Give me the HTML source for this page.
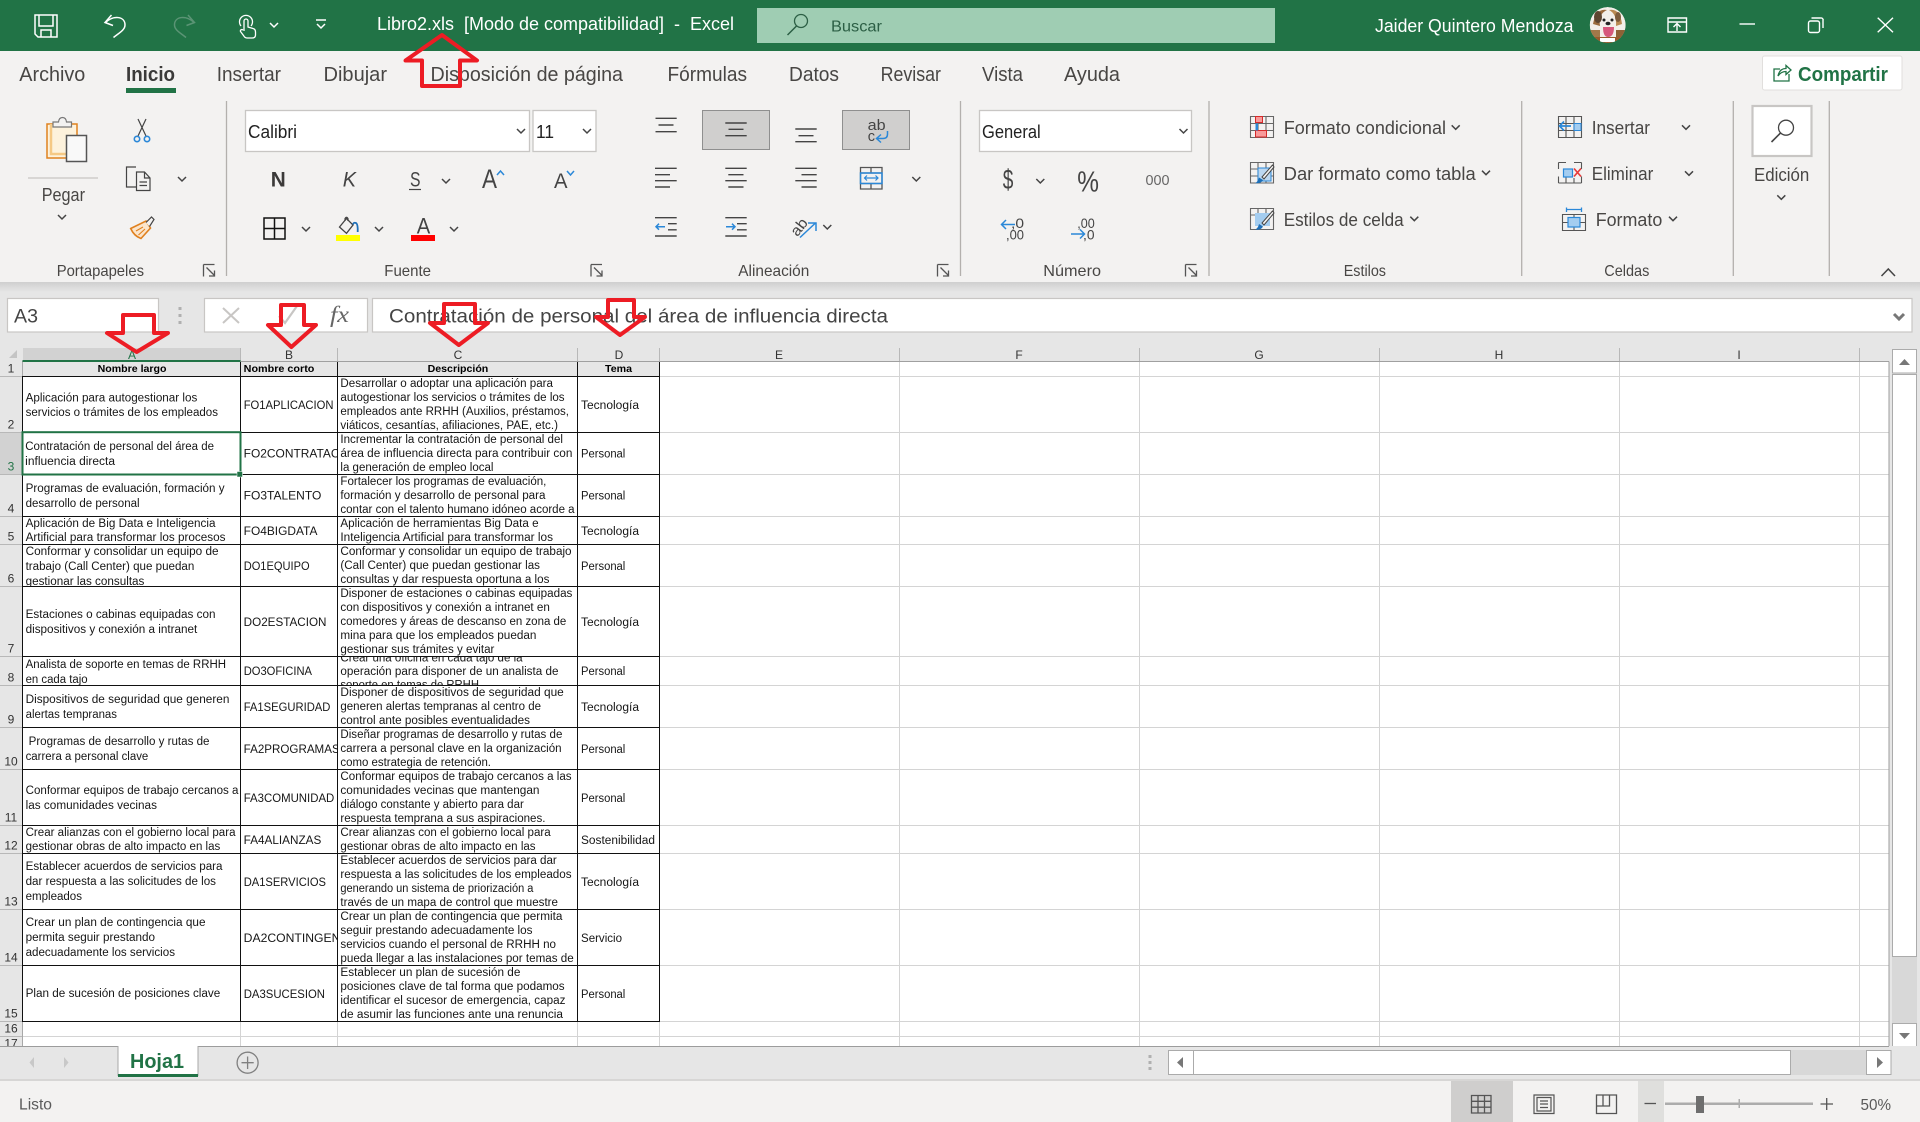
<!DOCTYPE html>
<html lang="es"><head><meta charset="utf-8"><title>Libro2.xls - Excel</title>
<style>
html,body{margin:0;padding:0;background:#e6e6e6;width:1920px;height:1122px;overflow:hidden}
svg{display:block;font-family:"Liberation Sans",sans-serif}
.c{font-size:11.5px;fill:#161616}
.h{font-size:10.5px;font-weight:bold;fill:#000}
.r{font-size:12px;fill:#333;text-anchor:middle}
.l{font-size:16px;fill:#484644}
.t{font-size:20px;fill:#484644}
.m{font-size:18px;fill:#484644}
.w{font-size:18px;fill:#fff}
.ln{stroke:#444;stroke-width:1.4;fill:none}
</style></head><body>
<svg width="1920" height="1122" viewBox="0 0 1920 1122" xmlns="http://www.w3.org/2000/svg" lang="es">
<defs>
<path id="v" d="M-4,-2 L0,2 L4,-2" fill="none" stroke="#444" stroke-width="1.5"/>
<g id="lau"><path d="M0,0H11M0,0V12M3,3L11,11M11,6V11.5H5.5" fill="none" stroke="#555" stroke-width="1.3"/></g>
<linearGradient id="sh" x1="0" y1="0" x2="0" y2="1"><stop offset="0" stop-color="#cfcfcf"/><stop offset="1" stop-color="#e6e6e6"/></linearGradient>
<clipPath id="cb"><rect x="241" y="340" width="96.4" height="700"/></clipPath>
<clipPath id="c8"><rect x="338" y="657" width="239" height="28"/></clipPath>
<clipPath id="c6"><rect x="23" y="545" width="217" height="41"/></clipPath>
<clipPath id="av"><circle cx="1607.7" cy="25" r="18"/></clipPath>
</defs>

<!-- base -->
<rect x="0" y="0" width="1920" height="1122" fill="#e6e6e6"/>
<rect x="0" y="0" width="1920" height="51" fill="#217346"/>
<rect x="0" y="51" width="1920" height="231" fill="#f3f2f1"/>
<rect x="0" y="282" width="1920" height="10" fill="url(#sh)"/>

<!-- title bar icons -->
<g fill="none" stroke="#fff" stroke-width="1.5">
<path d="M35,15H57V37H38L35,34Z"/><path d="M39,15V26H53V15"/><path d="M41,37V30H51V37"/>
<path d="M111.500,15 L105,22.500 L113,25.500 M105.500,22.500 C113,15 125,16 125,25 C125,30 119,33 113.500,37.500"/>
</g>
<path d="M188,15 L194.500,22.500 L186.500,25.500 M194,22.500 C186.500,15 174.500,16 174.500,25 C174.500,30 180.500,33 186,37.500" fill="none" stroke="#5b9475" stroke-width="1.500"/>
<g fill="none" stroke="#fff" stroke-width="1.3">
<path d="M241,26 A6.500,6.500 0 1 1 251,26"/>
<path d="M244,31 V21 A2,2 0 0 1 248,21 V27 L253,28.500 C255,29 255.500,30 255.500,32 V35 C255.500,37 254,38 252,38 H247 C245,38 244.500,37 243.500,35.500 L240.500,31.500 C240,30 241.500,29 243,30"/>
</g>
<path d="M270,23 L274,27 L278,23" fill="none" stroke="#fff" stroke-width="1.500"/>
<path d="M316,20H326M317,24 L321,28 L325,24" fill="none" stroke="#fff" stroke-width="1.500"/>
<text x="377" y="30" class="w" textLength="357" lengthAdjust="spacingAndGlyphs" xml:space="preserve">Libro2.xls  [Modo de compatibilidad]  -  Excel</text>
<rect x="757" y="8" width="518" height="35" fill="#9fcdb3"/>
<circle cx="801" cy="21" r="6.500" fill="none" stroke="#2c5f45" stroke-width="1.300"/>
<path d="M796.500,26 L787.500,35" stroke="#2c5f45" stroke-width="1.500"/>
<text x="831" y="31.500" font-size="16" fill="#2c5f45" textLength="51" lengthAdjust="spacingAndGlyphs">Buscar</text>
<text x="1375" y="32" class="w" textLength="198.500" lengthAdjust="spacingAndGlyphs">Jaider Quintero Mendoza</text>

<!-- avatar -->
<g clip-path="url(#av)">
<circle cx="1607.700" cy="25" r="18" fill="#f3efe9"/>
<path d="M1593,24 Q1596,8 1607,10 Q1598,14 1600,26Z" fill="#9a6a3c"/>
<path d="M1622,24 Q1620,8 1609,10 Q1617,14 1616,26Z" fill="#b98a52"/>
<ellipse cx="1598" cy="17" rx="4" ry="6" fill="#5d4630"/>
<ellipse cx="1618" cy="17" rx="3" ry="5" fill="#7d5c3c"/>
<circle cx="1604" cy="20" r="1.500" fill="#222"/><circle cx="1612" cy="20" r="1.500" fill="#222"/>
<ellipse cx="1608" cy="23.500" rx="2.500" ry="1.800" fill="#222"/>
<path d="M1603,27 H1614 Q1614,37 1608,37 Q1603,37 1603,27Z" fill="#d7587c"/>
<rect x="1590" y="30" width="10" height="7" fill="#a37849"/>
<rect x="1616" y="30" width="10" height="7" fill="#8d6236"/>
<rect x="1590" y="37" width="36" height="6" fill="#9b5a2c"/>
<rect x="1600" y="38" width="15" height="4" fill="#fff"/>
</g>

<!-- window buttons -->
<g fill="none" stroke="#fff" stroke-width="1.400">
<path d="M1668,18H1686.500V32H1668ZM1668,22H1686.500M1677,31V24M1673.500,27L1677,23.500L1680.500,27"/>
<path d="M1739.500,24H1755"/>
<rect x="1808.500" y="21" width="11" height="11.500" rx="2"/>
<path d="M1811.500,18H1820.500A2,2 0 0 1 1823,20.500V28"/>
<path d="M1877.700,17.700L1893,32.300M1893,17.700L1877.700,32.300"/>
</g>

<!-- tabs -->
<text x="19.300" y="81" class="t" textLength="66" lengthAdjust="spacingAndGlyphs">Archivo</text>
<text x="126" y="81" class="t" textLength="49" lengthAdjust="spacingAndGlyphs" font-weight="bold" style="fill:#3b3a39">Inicio</text>
<rect x="126" y="88" width="50" height="5" fill="#217346"/>
<text x="216.700" y="81" class="t" textLength="64.300" lengthAdjust="spacingAndGlyphs">Insertar</text>
<text x="323.500" y="81" class="t" textLength="63.500" lengthAdjust="spacingAndGlyphs">Dibujar</text>
<text x="430.500" y="81" class="t" textLength="192.500" lengthAdjust="spacingAndGlyphs">Disposición de página</text>
<text x="667.500" y="81" class="t" textLength="79.500" lengthAdjust="spacingAndGlyphs">Fórmulas</text>
<text x="789" y="81" class="t" textLength="50" lengthAdjust="spacingAndGlyphs">Datos</text>
<text x="880.600" y="81" class="t" textLength="60.400" lengthAdjust="spacingAndGlyphs">Revisar</text>
<text x="982" y="81" class="t" textLength="41" lengthAdjust="spacingAndGlyphs">Vista</text>
<text x="1064" y="81" class="t" textLength="56" lengthAdjust="spacingAndGlyphs">Ayuda</text>
<rect x="1762.500" y="56" width="139.500" height="34" rx="2" fill="#fff" stroke="#e1dfdd"/>
<path d="M1780,69H1774V81H1789V74M1778,76C1779,71 1782,68.500 1786,68.500V65.500L1791,70L1786,74.500V71.500C1783,71.500 1780,73 1778,76Z" fill="none" stroke="#217346" stroke-width="1.300"/>
<text x="1798" y="81" font-size="20" font-weight="bold" fill="#217346" textLength="90" lengthAdjust="spacingAndGlyphs">Compartir</text>

<!-- group separators -->
<g stroke="#b3b0ad" stroke-width="1.300">
<path d="M226.500,101V276M960.500,101V276M1209,101V276M1521.700,101V276M1733.300,101V276M1829.300,101V276"/>
</g>

<!-- Portapapeles -->
<path d="M47,124H77V158H47Z" fill="#fdf2dc" stroke="#e0811f" stroke-width="1.500"/>
<path d="M51,124V154H66" fill="none" stroke="#f5c985" stroke-width="2.500"/>
<path d="M53,127V122H58.500Q59,117.500 62.500,117.500Q66,117.500 66.500,122H71.500V127Z" fill="#f3f2f1" stroke="#777" stroke-width="1.200"/>
<rect x="66.500" y="135.500" width="20" height="26" fill="#f9f9f9" stroke="#555" stroke-width="1.500"/>
<path d="M28,178H98" stroke="#c8c6c4" stroke-width="1.200"/>
<text x="41.700" y="201" class="m" textLength="43.300" lengthAdjust="spacingAndGlyphs">Pegar</text>
<use href="#v" x="62" y="217"/>
<path d="M138,119L146,136M146,119L138,136" stroke="#444" stroke-width="1.200" fill="none"/>
<circle cx="137" cy="139" r="2.700" fill="none" stroke="#2b88d8" stroke-width="1.600"/>
<circle cx="147" cy="139" r="2.700" fill="none" stroke="#2b88d8" stroke-width="1.600"/>
<path d="M136,167H126.500V187H136.500 M136.500,172V190.500H150V178L144.500,172Z M144.500,172V178H150M139.500,182H147M139.500,185.500H147" fill="none" stroke="#444" stroke-width="1.200"/>
<use href="#v" x="182" y="179"/>
<path d="M130.700,228.500L146,221L150.500,228L141,238.500Q134,236 130.700,228.500Z" fill="#fbe5cb" stroke="#e0811f" stroke-width="1.600"/>
<path d="M136,231L143,227M138.500,235L145,229" fill="none" stroke="#e0811f" stroke-width="1.100"/>
<path d="M146,222.500L151.500,217L154,219.500L149.500,226.500" fill="#f3f2f1" stroke="#444" stroke-width="1.200"/>
<text x="56.700" y="276" class="l" textLength="87.300" lengthAdjust="spacingAndGlyphs">Portapapeles</text>
<use href="#lau" x="203.500" y="264.500"/>

<!-- Fuente -->
<rect x="245.500" y="110.500" width="284" height="41" fill="#fff" stroke="#c8c6c4" stroke-width="1.300"/>
<text x="248" y="138" font-size="18" fill="#222" textLength="49" lengthAdjust="spacingAndGlyphs">Calibri</text>
<use href="#v" x="521" y="131"/>
<rect x="533" y="110.500" width="63" height="41" fill="#fff" stroke="#c8c6c4" stroke-width="1.300"/>
<text x="536" y="138" font-size="18" fill="#222" textLength="18" lengthAdjust="spacingAndGlyphs">11</text>
<use href="#v" x="587" y="131"/>
<text x="270.700" y="186.700" font-size="21" font-weight="bold" fill="#3b3a39" textLength="15" lengthAdjust="spacingAndGlyphs">N</text>
<text x="342.700" y="186.700" font-size="21" font-style="italic" fill="#444" textLength="13.300" lengthAdjust="spacingAndGlyphs">K</text>
<text x="410" y="186.500" font-size="21" fill="#444" textLength="10.500" lengthAdjust="spacingAndGlyphs">S</text>
<path d="M409,189.500H421" stroke="#444" stroke-width="1.200"/>
<use href="#v" x="446" y="181"/>
<text x="482" y="188" font-size="27" fill="#444" textLength="15" lengthAdjust="spacingAndGlyphs">A</text>
<path d="M497,175L500.500,171L504,175" fill="none" stroke="#2b88d8" stroke-width="1.500"/>
<text x="554" y="188" font-size="21" fill="#444" textLength="13.500" lengthAdjust="spacingAndGlyphs">A</text>
<path d="M567,171L570.500,175L574,171" fill="none" stroke="#2b88d8" stroke-width="1.500"/>
<path d="M264,218H285V239H264ZM274.500,218V239M264,228.500H285" fill="none" stroke="#111" stroke-width="1.500"/>
<use href="#v" x="306" y="229"/>
<path d="M339.500,227L346.500,218.500L353,225L346.500,233.300Z" fill="#f3f2f1" stroke="#444" stroke-width="1.300"/>
<path d="M345,221V218.500Q346.500,216 348,218.500V221" fill="none" stroke="#444" stroke-width="1.200"/>
<path d="M353,224.500Q353.500,222 356,223Q358,224 357.700,232" fill="none" stroke="#1d6fb8" stroke-width="1.800"/>
<rect x="336" y="235" width="24" height="6" fill="#ff0"/>
<use href="#v" x="379" y="229"/>
<text x="416.700" y="233.300" font-size="22" fill="#444" textLength="13.500" lengthAdjust="spacingAndGlyphs">A</text>
<rect x="411" y="235" width="24" height="6" fill="#f00"/>
<use href="#v" x="454" y="229"/>
<text x="384.300" y="276" class="l" textLength="46.700" lengthAdjust="spacingAndGlyphs">Fuente</text>
<use href="#lau" x="591" y="264.500"/>

<!-- Alineación -->
<rect x="702.500" y="110.500" width="67" height="39" fill="#d0cfce" stroke="#8f8f8f"/>
<rect x="842.500" y="110.500" width="67" height="39" fill="#d0cfce" stroke="#8f8f8f"/>
<path class="ln" d="M655.500,118.300H676.700M658.500,125H673.500M655.500,131.700H676.700
M725.300,123H746.700M728.500,129.300H743.500M725.300,135.700H746.700
M795.300,129H816.700M798.500,135.700H813.500M795.300,141.700H816.700
M655,168.300H676.700M655,174.700H670M655,180.700H676.700M655,187H670
M725.300,168.300H746.700M728.300,174.700H743.500M725.300,180.700H746.700M728.300,187H743.500
M795.300,168.300H816.700M801.500,174.700H816.700M795.300,180.700H816.700M801.500,187H816.700
M655,217.700H676.700M668,223.700H676.700M668,229.800H676.700M655,236H676.700
M725.300,217.700H746.700M737,223.700H746.700M737,229.800H746.700M725.300,236H746.700"/>
<text x="867.700" y="130" font-size="14.500" fill="#444" textLength="18" lengthAdjust="spacingAndGlyphs">ab</text>
<text x="867.700" y="141" font-size="14.500" fill="#444" textLength="8">c</text>
<path d="M887.500,131V134Q887.500,138.500 883,138.500H877M881,134.500L876.500,138.500L881,142.500" fill="none" stroke="#2b88d8" stroke-width="1.500"/>
<path d="M860.500,167.500H882V189H860.500ZM860.500,173H882M860.500,183.500H882M871,167.500V173M871,183.500V189" fill="none" stroke="#555" stroke-width="1.300"/>
<rect x="860.500" y="173" width="21.500" height="10.500" fill="none" stroke="#2b88d8" stroke-width="1.500"/>
<path d="M864.500,178H878M867,175.500L864.500,178L867,180.500M875.500,175.500L878,178L875.500,180.500" fill="none" stroke="#2b88d8" stroke-width="1.200"/>
<use href="#v" x="916.300" y="179"/>
<path d="M665,226.700H656M659,223.700L656,226.700L659,229.700" fill="none" stroke="#2b88d8" stroke-width="1.500"/>
<path d="M726,226.700H735M732,223.700L735,226.700L732,229.700" fill="none" stroke="#2b88d8" stroke-width="1.500"/>
<text transform="translate(797,228) rotate(-52)" x="-7" y="6" font-size="15" fill="#444" textLength="18" lengthAdjust="spacingAndGlyphs">ab</text>
<path d="M800,237.500L815.500,223M808,223H816V231" fill="none" stroke="#2b88d8" stroke-width="1.500"/>
<use href="#v" x="827.300" y="227"/>
<text x="738.300" y="276" class="l" textLength="71" lengthAdjust="spacingAndGlyphs">Alineación</text>
<use href="#lau" x="937.500" y="264.500"/>

<!-- Número -->
<rect x="979.500" y="110.500" width="212" height="41" fill="#fff" stroke="#c8c6c4" stroke-width="1.300"/>
<text x="982" y="138" font-size="18" fill="#222" textLength="58.700" lengthAdjust="spacingAndGlyphs">General</text>
<use href="#v" x="1183.500" y="131"/>
<text x="1002.700" y="189" font-size="28" fill="#444" textLength="10.600" lengthAdjust="spacingAndGlyphs">$</text>
<use href="#v" x="1040.300" y="181"/>
<text x="1077.300" y="191.500" font-size="29" fill="#444" textLength="21.700" lengthAdjust="spacingAndGlyphs">%</text>
<text x="1145.500" y="185" font-size="14.500" fill="#666" textLength="24" lengthAdjust="spacingAndGlyphs">000</text>
<text x="1011" y="228" font-size="14" fill="#444" textLength="13" lengthAdjust="spacingAndGlyphs">,0</text>
<text x="1006" y="239.300" font-size="14" fill="#444" textLength="18" lengthAdjust="spacingAndGlyphs">,00</text>
<path d="M1015,224.500H1002M1006,220L1001.500,224.500L1006,229" fill="none" stroke="#2b88d8" stroke-width="1.500"/>
<text x="1077.300" y="228" font-size="14" fill="#444" textLength="17.500" lengthAdjust="spacingAndGlyphs">,00</text>
<text x="1083" y="239.300" font-size="14" fill="#444" textLength="11.500" lengthAdjust="spacingAndGlyphs">,0</text>
<path d="M1071,234H1084.500M1080,229.500L1084.500,234L1080,238.500" fill="none" stroke="#2b88d8" stroke-width="1.500"/>
<text x="1043.300" y="276" class="l" textLength="57.700" lengthAdjust="spacingAndGlyphs">Número</text>
<use href="#lau" x="1185.500" y="264.500"/>

<!-- Estilos -->
<g fill="none" stroke="#666" stroke-width="1.100">
<path d="M1250.500,116.500H1273.500V137.500H1250.500ZM1250.500,123.500H1273.500M1250.500,130.500H1273.500M1258,116.500V137.500M1266,116.500V137.500"/>
<path d="M1250.500,162.500H1273.500V183H1250.500ZM1250.500,169H1273.500M1250.500,176H1273.500M1258,162.500V183M1266,162.500V183"/>
<path d="M1250.500,208.500H1273.500V229.500H1250.500ZM1250.500,215H1273.500M1258,208.500V215M1266,208.500V215"/>
</g>
<rect x="1255.500" y="116.500" width="7" height="6" fill="#f79a9a" stroke="#d62a2a"/>
<rect x="1255.500" y="130.500" width="11" height="6.500" fill="#f79a9a" stroke="#d62a2a"/>
<rect x="1255.500" y="123.500" width="2.500" height="7" fill="#2b88d8"/>
<rect x="1258" y="168" width="13" height="13" fill="#bcd7f0" stroke="#2b88d8"/>
<path d="M1272.500,165L1262,177L1264,179L1274,167Z" fill="#f3f2f1" stroke="#444"/>
<path d="M1255,183Q1258,182 1259,177.500L1263,180Q1261,184 1255,183Z" fill="#1d6fb8"/>
<rect x="1255" y="213" width="15" height="13" fill="#a4cdf0"/>
<path d="M1272.500,211L1262,223L1264,225L1274,213Z" fill="#f3f2f1" stroke="#444"/>
<path d="M1255,229.500Q1258,228.500 1259,224L1263,226.500Q1261,230.500 1255,229.500Z" fill="#1d6fb8"/>
<text x="1283.700" y="134" class="m" textLength="162.300" lengthAdjust="spacingAndGlyphs">Formato condicional</text>
<use href="#v" x="1455.700" y="127.300"/>
<text x="1283.700" y="180" class="m" textLength="192" lengthAdjust="spacingAndGlyphs">Dar formato como tabla</text>
<use href="#v" x="1486" y="172.700"/>
<text x="1283.700" y="226" class="m" textLength="120" lengthAdjust="spacingAndGlyphs">Estilos de celda</text>
<use href="#v" x="1414.300" y="218.700"/>
<text x="1343.700" y="276" class="l" textLength="42.300" lengthAdjust="spacingAndGlyphs">Estilos</text>

<!-- Celdas -->
<g fill="none" stroke="#555" stroke-width="1.100">
<path d="M1558.500,116.500H1581.500V137.500H1558.500ZM1558.500,123.500H1581.500M1558.500,130.500H1581.500M1566,116.500V137.500M1574,116.500V137.500"/>
<path d="M1558.500,162.500H1566M1574,162.500H1581.500M1558.500,183H1581.500M1558.500,176.500V183M1581.500,176.500V183M1558.500,162.500V169M1581.500,162.500V169M1566,176V183M1574,178V183"/>
<path d="M1562.500,214.500H1585.500V230.500H1562.500ZM1562.500,222.500H1585.500M1574,214.500V230.500"/>
</g>
<rect x="1574" y="123.500" width="7" height="7" fill="#a4cdf0" stroke="#2b88d8"/>
<path d="M1571,126H1560M1564,121.500L1559.500,126L1564,130.500" fill="none" stroke="#2b88d8" stroke-width="1.700"/>
<rect x="1563.500" y="169" width="9" height="8" fill="#a4cdf0" stroke="#2b88d8" stroke-width="1.200"/>
<path d="M1574,168.500L1581,176.500M1581,168.500L1574,176.500" stroke="#e83b3b" stroke-width="1.700"/>
<rect x="1568" y="217.500" width="12" height="9.500" fill="#a4cdf0" stroke="#2b88d8" stroke-width="1.200"/>
<path d="M1566.500,207.500V212M1581.500,207.500V212M1566.500,209.500H1581.500" fill="none" stroke="#2b88d8" stroke-width="1.300"/>
<text x="1591.700" y="134" class="m" textLength="58.300" lengthAdjust="spacingAndGlyphs">Insertar</text>
<use href="#v" x="1686" y="127.300"/>
<text x="1591.700" y="180" class="m" textLength="61.600" lengthAdjust="spacingAndGlyphs">Eliminar</text>
<use href="#v" x="1689" y="173.300"/>
<text x="1595.700" y="226" class="m" textLength="66.600" lengthAdjust="spacingAndGlyphs">Formato</text>
<use href="#v" x="1673" y="218.700"/>
<text x="1604.300" y="276" class="l" textLength="45" lengthAdjust="spacingAndGlyphs">Celdas</text>

<!-- Edición -->
<rect x="1752.500" y="106" width="59" height="50" fill="#fff" stroke="#c8c6c4" stroke-width="2.200"/>
<circle cx="1786" cy="127.700" r="7.500" fill="none" stroke="#444" stroke-width="1.300"/>
<path d="M1780.500,133L1771.500,142" stroke="#444" stroke-width="1.600"/>
<text x="1754" y="181" class="m" textLength="55.300" lengthAdjust="spacingAndGlyphs">Edición</text>
<use href="#v" x="1781.300" y="197.300"/>
<path d="M1881.500,276L1888.300,269L1895,276" fill="none" stroke="#444" stroke-width="1.500"/>

<!-- formula bar -->
<rect x="7.500" y="298.500" width="151" height="33.500" fill="#fff" stroke="#c8c6c4" stroke-width="1.200"/>
<text x="14" y="322.700" font-size="19" fill="#444" textLength="24" lengthAdjust="spacingAndGlyphs">A3</text>
<g fill="#b0b0b0"><rect x="178.500" y="307" width="3" height="3"/><rect x="178.500" y="314" width="3" height="3"/><rect x="178.500" y="321" width="3" height="3"/></g>
<rect x="204.500" y="298.500" width="163" height="33.500" fill="#fff" stroke="#c8c6c4" stroke-width="1.200"/>
<rect x="372.500" y="298.500" width="1539.500" height="33.500" fill="#fff" stroke="#c8c6c4" stroke-width="1.200"/>
<path d="M223,308L239,323M239,308L223,323" stroke="#c8c6c4" stroke-width="2"/>
<path d="M279,316L285,323L297,306" fill="none" stroke="#c8c6c4" stroke-width="2.200"/>
<text x="330" y="322" font-family="Liberation Serif" font-size="23" font-style="italic" fill="#666" textLength="19" lengthAdjust="spacingAndGlyphs">fx</text>
<text x="389" y="322.500" font-size="19" fill="#444" textLength="499" lengthAdjust="spacingAndGlyphs">Contratación de personal del área de influencia directa</text>
<path d="M1894,314L1899,319L1904,314" fill="none" stroke="#777" stroke-width="3"/>

<!-- sheet -->
<rect x="23" y="362" width="1866" height="684" fill="#fff"/>
<rect x="0" y="348" width="1889" height="13" fill="#e6e6e6"/>
<rect x="0" y="361" width="23" height="685" fill="#e6e6e6"/>
<rect x="23" y="348" width="218" height="13" fill="#d2d2d2"/>
<rect x="0" y="432.500" width="22.500" height="42" fill="#d2d2d2"/>
<path d="M9,358L17,358L17,350Z" fill="#c4c4c4"/>
<!-- gray grid -->
<g stroke="#d4d4d4" stroke-width="1">
<path d="M660,376.500H1889M660,432.500H1889M660,474.500H1889M660,516.500H1889M660,544.500H1889M660,586.500H1889M660,656.500H1889M660,685.500H1889M660,727.500H1889M660,769.500H1889M660,825.500H1889M660,853.500H1889M660,909.500H1889M660,965.500H1889M23,1021.500H1889M23,1036.500H1889"/>
<path d="M899.500,362V1046M1139.500,362V1046M1379.500,362V1046M1619.500,362V1046M1859.500,362V1046M240.500,1022V1046M337.500,1022V1046M577.500,1022V1046M659.500,1022V1046"/>
</g>
<g stroke="#b8b8b8" stroke-width="1">
<path d="M240.500,348V361M337.500,348V361M577.500,348V361M659.500,348V361M899.500,348V361M1139.500,348V361M1379.500,348V361M1619.500,348V361M1859.500,348V361"/>
<path d="M0,376.500H23M0,432.500H23M0,474.500H23M0,516.500H23M0,544.500H23M0,586.500H23M0,656.500H23M0,685.500H23M0,727.500H23M0,769.500H23M0,825.500H23M0,853.500H23M0,909.500H23M0,965.500H23M0,1021.500H23M0,1036.500H23"/>
</g>
<path d="M22.500,361.500H1889" stroke="#a0a0a0"/>
<path d="M22.500,361V1046" stroke="#a8a8a8"/>
<rect x="23" y="362" width="637" height="14.500" fill="#e6e6e6"/>

<!-- column letters -->
<text x="132" y="359" class="r" style="fill:#217346">A</text>
<text x="289" y="359" class="r">B</text>
<text x="458" y="359" class="r">C</text>
<text x="619" y="359" class="r">D</text>
<text x="779" y="359" class="r">E</text>
<text x="1019" y="359" class="r">F</text>
<text x="1259" y="359" class="r">G</text>
<text x="1499" y="359" class="r">H</text>
<text x="1739" y="359" class="r">I</text>

<!-- row numbers -->
<text x="11" y="372.700" class="r">1</text>
<text x="11" y="428.700" class="r">2</text>
<text x="11" y="470.700" class="r" style="fill:#217346">3</text>
<text x="11" y="512.700" class="r">4</text>
<text x="11" y="540.700" class="r">5</text>
<text x="11" y="582.700" class="r">6</text>
<text x="11" y="652.700" class="r">7</text>
<text x="11" y="681.700" class="r">8</text>
<text x="11" y="723.700" class="r">9</text>
<text x="11" y="765.700" class="r">10</text>
<text x="11" y="821.700" class="r">11</text>
<text x="11" y="849.700" class="r">12</text>
<text x="11" y="905.700" class="r">13</text>
<text x="11" y="961.700" class="r">14</text>
<text x="11" y="1017.700" class="r">15</text>
<text x="11" y="1032.700" class="r">16</text>
<text x="11" y="1047.500" class="r">17</text>

<!-- header row -->
<text x="97.600" y="372" class="h" textLength="68.900" lengthAdjust="spacingAndGlyphs">Nombre largo</text>
<text x="243.700" y="372" class="h" textLength="70.700" lengthAdjust="spacingAndGlyphs">Nombre corto</text>
<text x="427.600" y="372" class="h" textLength="60.700" lengthAdjust="spacingAndGlyphs">Descripción</text>
<text x="605" y="372" class="h" textLength="27" lengthAdjust="spacingAndGlyphs">Tema</text>

<!-- col A -->
<text class="c" x="25.600" y="401.500" textLength="171.700" lengthAdjust="spacingAndGlyphs">Aplicación para autogestionar los</text>
<text class="c" x="25.600" y="416" textLength="192.400" lengthAdjust="spacingAndGlyphs">servicios o trámites de los empleados</text>
<text class="c" x="25.200" y="450" textLength="188.800" lengthAdjust="spacingAndGlyphs">Contratación de personal del área de</text>
<text class="c" x="25.200" y="465" textLength="89.800" lengthAdjust="spacingAndGlyphs">influencia directa</text>
<text class="c" x="25.600" y="492" textLength="199" lengthAdjust="spacingAndGlyphs">Programas de evaluación, formación y</text>
<text class="c" x="25.600" y="507" textLength="114" lengthAdjust="spacingAndGlyphs">desarrollo de personal</text>
<text class="c" x="25.600" y="527" textLength="189.900" lengthAdjust="spacingAndGlyphs">Aplicación de Big Data e Inteligencia</text>
<text class="c" x="25.600" y="541" textLength="199.900" lengthAdjust="spacingAndGlyphs">Artificial para transformar los procesos</text>
<g clip-path="url(#c6)">
<text class="c" x="25.600" y="555" textLength="193" lengthAdjust="spacingAndGlyphs">Conformar y consolidar un equipo de</text>
<text class="c" x="25.600" y="570" textLength="168.700" lengthAdjust="spacingAndGlyphs">trabajo (Call Center) que puedan</text>
<text class="c" x="25.600" y="585" textLength="118.800" lengthAdjust="spacingAndGlyphs">gestionar las consultas</text>
</g>
<text class="c" x="25.600" y="618" textLength="189.900" lengthAdjust="spacingAndGlyphs">Estaciones o cabinas equipadas con</text>
<text class="c" x="25.600" y="633" textLength="171.700" lengthAdjust="spacingAndGlyphs">dispositivos y conexión a intranet</text>
<text class="c" x="25.600" y="668" textLength="200.400" lengthAdjust="spacingAndGlyphs">Analista de soporte en temas de RRHH</text>
<text class="c" x="25.600" y="683" textLength="62" lengthAdjust="spacingAndGlyphs">en cada tajo</text>
<text class="c" x="25.600" y="703" textLength="203.800" lengthAdjust="spacingAndGlyphs">Dispositivos de seguridad que generen</text>
<text class="c" x="25.600" y="718" textLength="91.400" lengthAdjust="spacingAndGlyphs">alertas tempranas</text>
<text class="c" x="28.600" y="745" textLength="180.900" lengthAdjust="spacingAndGlyphs">Programas de desarrollo y rutas de</text>
<text class="c" x="25.600" y="760" textLength="122.700" lengthAdjust="spacingAndGlyphs">carrera a personal clave</text>
<text class="c" x="25.600" y="794" textLength="212.900" lengthAdjust="spacingAndGlyphs">Conformar equipos de trabajo cercanos a</text>
<text class="c" x="25.600" y="809" textLength="131.400" lengthAdjust="spacingAndGlyphs">las comunidades vecinas</text>
<text class="c" x="25.600" y="836" textLength="209.900" lengthAdjust="spacingAndGlyphs">Crear alianzas con el gobierno local para</text>
<text class="c" x="25.600" y="850" textLength="194.700" lengthAdjust="spacingAndGlyphs">gestionar obras de alto impacto en las</text>
<text class="c" x="25.600" y="870" textLength="196.900" lengthAdjust="spacingAndGlyphs">Establecer acuerdos de servicios para</text>
<text class="c" x="25.600" y="885" textLength="190.400" lengthAdjust="spacingAndGlyphs">dar respuesta a las solicitudes de los</text>
<text class="c" x="25.600" y="900" textLength="56.400" lengthAdjust="spacingAndGlyphs">empleados</text>
<text class="c" x="25.600" y="926" textLength="179.900" lengthAdjust="spacingAndGlyphs">Crear un plan de contingencia que</text>
<text class="c" x="25.600" y="941" textLength="129.400" lengthAdjust="spacingAndGlyphs">permita seguir prestando</text>
<text class="c" x="25.600" y="956" textLength="149.400" lengthAdjust="spacingAndGlyphs">adecuadamente los servicios</text>
<text class="c" x="25.600" y="997" textLength="194.700" lengthAdjust="spacingAndGlyphs">Plan de sucesión de posiciones clave</text>

<!-- col B -->
<g clip-path="url(#cb)">
<text class="c" x="243.700" y="409" textLength="89.800" lengthAdjust="spacingAndGlyphs">FO1APLICACION</text>
<text class="c" x="243.700" y="457.700" textLength="117" lengthAdjust="spacingAndGlyphs">FO2CONTRATACION</text>
<text class="c" x="243.700" y="499.700" textLength="77.600" lengthAdjust="spacingAndGlyphs">FO3TALENTO</text>
<text class="c" x="243.700" y="535" textLength="73.700" lengthAdjust="spacingAndGlyphs">FO4BIGDATA</text>
<text class="c" x="243.700" y="570" textLength="65.900" lengthAdjust="spacingAndGlyphs">DO1EQUIPO</text>
<text class="c" x="243.700" y="626" textLength="82.800" lengthAdjust="spacingAndGlyphs">DO2ESTACION</text>
<text class="c" x="243.700" y="675" textLength="68.300" lengthAdjust="spacingAndGlyphs">DO3OFICINA</text>
<text class="c" x="243.700" y="711" textLength="86.700" lengthAdjust="spacingAndGlyphs">FA1SEGURIDAD</text>
<text class="c" x="243.700" y="753" textLength="96" lengthAdjust="spacingAndGlyphs">FA2PROGRAMAS</text>
<text class="c" x="243.700" y="802" textLength="90.600" lengthAdjust="spacingAndGlyphs">FA3COMUNIDAD</text>
<text class="c" x="243.700" y="844" textLength="77.600" lengthAdjust="spacingAndGlyphs">FA4ALIANZAS</text>
<text class="c" x="243.700" y="886" textLength="82.300" lengthAdjust="spacingAndGlyphs">DA1SERVICIOS</text>
<text class="c" x="243.700" y="942" textLength="117" lengthAdjust="spacingAndGlyphs">DA2CONTINGENCIA</text>
<text class="c" x="243.700" y="998" textLength="81.300" lengthAdjust="spacingAndGlyphs">DA3SUCESION</text>
</g>

<!-- col C -->
<text class="c" x="340.400" y="387" textLength="212.600" lengthAdjust="spacingAndGlyphs">Desarrollar o adoptar una aplicación para</text>
<text class="c" x="340.400" y="401" textLength="224.200" lengthAdjust="spacingAndGlyphs">autogestionar los servicios o trámites de los</text>
<text class="c" x="340.400" y="415" textLength="228.600" lengthAdjust="spacingAndGlyphs">empleados ante RRHH (Auxilios, préstamos,</text>
<text class="c" x="340.400" y="429" textLength="217.600" lengthAdjust="spacingAndGlyphs">viáticos, cesantías, afiliaciones, PAE, etc.)</text>
<text class="c" x="340.400" y="443" textLength="222.600" lengthAdjust="spacingAndGlyphs">Incrementar la contratación de personal del</text>
<text class="c" x="340.400" y="457" textLength="232" lengthAdjust="spacingAndGlyphs">área de influencia directa para contribuir con</text>
<text class="c" x="340.400" y="471" textLength="153.100" lengthAdjust="spacingAndGlyphs">la generación de empleo local</text>
<text class="c" x="340.400" y="485" textLength="206" lengthAdjust="spacingAndGlyphs">Fortalecer los programas de evaluación,</text>
<text class="c" x="340.400" y="499" textLength="205.100" lengthAdjust="spacingAndGlyphs">formación y desarrollo de personal para</text>
<text class="c" x="340.400" y="513" textLength="234.200" lengthAdjust="spacingAndGlyphs">contar con el talento humano idóneo acorde a</text>
<text class="c" x="340.400" y="527" textLength="198.200" lengthAdjust="spacingAndGlyphs">Aplicación de herramientas Big Data e</text>
<text class="c" x="340.400" y="541" textLength="212.600" lengthAdjust="spacingAndGlyphs">Inteligencia Artificial para transformar los</text>
<text class="c" x="340.400" y="555" textLength="231.200" lengthAdjust="spacingAndGlyphs">Conformar y consolidar un equipo de trabajo</text>
<text class="c" x="340.400" y="569" textLength="199.600" lengthAdjust="spacingAndGlyphs">(Call Center) que puedan gestionar las</text>
<text class="c" x="340.400" y="583" textLength="209" lengthAdjust="spacingAndGlyphs">consultas y dar respuesta oportuna a los</text>
<text class="c" x="340.400" y="597" textLength="232" lengthAdjust="spacingAndGlyphs">Disponer de estaciones o cabinas equipadas</text>
<text class="c" x="340.400" y="611" textLength="209.500" lengthAdjust="spacingAndGlyphs">con dispositivos y conexión a intranet en</text>
<text class="c" x="340.400" y="625" textLength="225.900" lengthAdjust="spacingAndGlyphs">comedores y áreas de descanso en zona de</text>
<text class="c" x="340.400" y="639" textLength="196" lengthAdjust="spacingAndGlyphs">mina para que los empleados puedan</text>
<text class="c" x="340.400" y="653" textLength="154" lengthAdjust="spacingAndGlyphs">gestionar sus trámites y evitar</text>
<g clip-path="url(#c8)">
<text class="c" x="340.400" y="661.300" textLength="182.200" lengthAdjust="spacingAndGlyphs">Crear una oficina en cada tajo de la</text>
<text class="c" x="340.400" y="675" textLength="218.100" lengthAdjust="spacingAndGlyphs">operación para disponer de un analista de</text>
<text class="c" x="340.400" y="688.700" textLength="138.600" lengthAdjust="spacingAndGlyphs">soporte en temas de RRHH</text>
</g>
<text class="c" x="340.400" y="696" textLength="223.400" lengthAdjust="spacingAndGlyphs">Disponer de dispositivos de seguridad que</text>
<text class="c" x="340.400" y="710" textLength="200.600" lengthAdjust="spacingAndGlyphs">generen alertas tempranas al centro de</text>
<text class="c" x="340.400" y="724" textLength="189.600" lengthAdjust="spacingAndGlyphs">control ante posibles eventualidades</text>
<text class="c" x="340.400" y="738" textLength="222" lengthAdjust="spacingAndGlyphs">Diseñar programas de desarrollo y rutas de</text>
<text class="c" x="340.400" y="752" textLength="221.200" lengthAdjust="spacingAndGlyphs">carrera a personal clave en la organización</text>
<text class="c" x="340.400" y="766" textLength="150.600" lengthAdjust="spacingAndGlyphs">como estrategia de retención.</text>
<text class="c" x="340.400" y="780" textLength="231.200" lengthAdjust="spacingAndGlyphs">Conformar equipos de trabajo cercanos a las</text>
<text class="c" x="340.400" y="794" textLength="199.100" lengthAdjust="spacingAndGlyphs">comunidades vecinas que mantengan</text>
<text class="c" x="340.400" y="808" textLength="183.400" lengthAdjust="spacingAndGlyphs">diálogo constante y abierto para dar</text>
<text class="c" x="340.400" y="822" textLength="205.100" lengthAdjust="spacingAndGlyphs">respuesta temprana a sus aspiraciones.</text>
<text class="c" x="340.400" y="836" textLength="210.300" lengthAdjust="spacingAndGlyphs">Crear alianzas con el gobierno local para</text>
<text class="c" x="340.400" y="850" textLength="195.200" lengthAdjust="spacingAndGlyphs">gestionar obras de alto impacto en las</text>
<text class="c" x="340.400" y="864" textLength="216.400" lengthAdjust="spacingAndGlyphs">Establecer acuerdos de servicios para dar</text>
<text class="c" x="340.400" y="878" textLength="231.200" lengthAdjust="spacingAndGlyphs">respuesta a las solicitudes de los empleados</text>
<text class="c" x="340.400" y="892" textLength="193" lengthAdjust="spacingAndGlyphs">generando un sistema de priorización a</text>
<text class="c" x="340.400" y="906" textLength="217.600" lengthAdjust="spacingAndGlyphs">través de un mapa de control que muestre</text>
<text class="c" x="340.400" y="920" textLength="222" lengthAdjust="spacingAndGlyphs">Crear un plan de contingencia que permita</text>
<text class="c" x="340.400" y="934" textLength="192.100" lengthAdjust="spacingAndGlyphs">seguir prestando adecuadamente los</text>
<text class="c" x="340.400" y="948" textLength="215.600" lengthAdjust="spacingAndGlyphs">servicios cuando el personal de RRHH no</text>
<text class="c" x="340.400" y="962" textLength="233.300" lengthAdjust="spacingAndGlyphs">pueda llegar a las instalaciones por temas de</text>
<text class="c" x="340.400" y="976" textLength="180" lengthAdjust="spacingAndGlyphs">Establecer un plan de sucesión de</text>
<text class="c" x="340.400" y="990" textLength="224.200" lengthAdjust="spacingAndGlyphs">posiciones clave de tal forma que podamos</text>
<text class="c" x="340.400" y="1004" textLength="225.100" lengthAdjust="spacingAndGlyphs">identificar el sucesor de emergencia, capaz</text>
<text class="c" x="340.400" y="1018" textLength="222.600" lengthAdjust="spacingAndGlyphs">de asumir las funciones ante una renuncia</text>

<!-- col D -->
<text class="c" x="581" y="409" textLength="58" lengthAdjust="spacingAndGlyphs">Tecnología</text>
<text class="c" x="581" y="457.700" textLength="44.300" lengthAdjust="spacingAndGlyphs">Personal</text>
<text class="c" x="581" y="499.700" textLength="44.300" lengthAdjust="spacingAndGlyphs">Personal</text>
<text class="c" x="581" y="535" textLength="58" lengthAdjust="spacingAndGlyphs">Tecnología</text>
<text class="c" x="581" y="570" textLength="44.300" lengthAdjust="spacingAndGlyphs">Personal</text>
<text class="c" x="581" y="626" textLength="58" lengthAdjust="spacingAndGlyphs">Tecnología</text>
<text class="c" x="581" y="675" textLength="44.300" lengthAdjust="spacingAndGlyphs">Personal</text>
<text class="c" x="581" y="711" textLength="58" lengthAdjust="spacingAndGlyphs">Tecnología</text>
<text class="c" x="581" y="753" textLength="44.300" lengthAdjust="spacingAndGlyphs">Personal</text>
<text class="c" x="581" y="802" textLength="44.300" lengthAdjust="spacingAndGlyphs">Personal</text>
<text class="c" x="581" y="844" textLength="74" lengthAdjust="spacingAndGlyphs">Sostenibilidad</text>
<text class="c" x="581" y="886" textLength="58" lengthAdjust="spacingAndGlyphs">Tecnología</text>
<text class="c" x="581" y="942" textLength="41" lengthAdjust="spacingAndGlyphs">Servicio</text>
<text class="c" x="581" y="998" textLength="44.300" lengthAdjust="spacingAndGlyphs">Personal</text>

<!-- table borders -->
<g stroke="#111" stroke-width="1" fill="none">
<path d="M23,376.500H660M23,432.500H660M23,474.500H660M23,516.500H660M23,544.500H660M23,586.500H660M23,656.500H660M23,685.500H660M23,727.500H660M23,769.500H660M23,825.500H660M23,853.500H660M23,909.500H660M23,965.500H660M23,1021.500H660"/>
<path d="M240.500,362V1022M337.500,362V1022M577.500,362V1022M659.500,362V1022M22.500,376V1022"/>
</g>
<rect x="22.500" y="360" width="218" height="2" fill="#217346"/>
<rect x="22.500" y="432.200" width="218" height="42.300" fill="none" stroke="#217346" stroke-width="2"/>
<rect x="237" y="471.500" width="5.500" height="5.500" fill="#217346" stroke="#fff" stroke-width=".5"/>

<!-- vertical scrollbar -->
<rect x="1889" y="348" width="31" height="699" fill="#e6e6e6"/>
<path d="M1889,361.500V1046" stroke="#9c9c9c"/>
<rect x="1892.500" y="349.500" width="24" height="23.500" fill="#fff" stroke="#ababab"/>
<path d="M1899,365H1910L1904.500,359Z" fill="#777"/>
<rect x="1892" y="374" width="25" height="649" fill="#d8d8d8"/>
<rect x="1892.500" y="374.500" width="24" height="582" fill="#fff" stroke="#ababab"/>
<rect x="1892.500" y="1023.500" width="24" height="23.500" fill="#fff" stroke="#ababab"/>
<path d="M1899,1033H1910L1904.500,1039Z" fill="#777"/>

<!-- tab bar -->
<rect x="0" y="1046" width="1920" height="34" fill="#e6e6e6"/>
<path d="M0,1046.500H1889" stroke="#9c9c9c"/>
<path d="M0,1080H1920" stroke="#c8c6c4"/>
<path d="M34,1057L29.500,1062.500L34,1068Z M64,1057L68.500,1062.500L64,1068Z" fill="#c8c8c8"/>
<rect x="118" y="1046" width="80" height="30" fill="#fff"/>
<path d="M118,1046V1076M198,1046V1076" stroke="#a8a8a8"/>
<rect x="118" y="1074" width="80" height="3" fill="#217346"/>
<text x="130" y="1068" font-size="20" font-weight="bold" fill="#217346" textLength="54" lengthAdjust="spacingAndGlyphs">Hoja1</text>
<circle cx="247.600" cy="1062.700" r="10.500" fill="none" stroke="#808080" stroke-width="1.300"/>
<path d="M241.500,1062.700H253.700M247.600,1056.500V1069" stroke="#808080" stroke-width="1.300"/>
<g fill="#b0b0b0"><rect x="1148.500" y="1055" width="3" height="3"/><rect x="1148.500" y="1061" width="3" height="3"/><rect x="1148.500" y="1067" width="3" height="3"/></g>
<rect x="1168" y="1050" width="723" height="25" fill="#d8d8d8"/>
<rect x="1168.500" y="1050.500" width="25" height="24" fill="#fff" stroke="#ababab"/>
<rect x="1193.500" y="1050.500" width="597" height="24" fill="#fff" stroke="#ababab"/>
<rect x="1866.500" y="1050.500" width="24.500" height="24" fill="#fff" stroke="#ababab"/>
<path d="M1183,1057V1068L1177,1062.500Z M1877,1057V1068L1883,1062.500Z" fill="#777"/>

<!-- status bar -->
<rect x="0" y="1081" width="1920" height="41" fill="#f3f2f1"/>
<text x="19" y="1109.700" font-size="16" fill="#5a5a5a" textLength="33" lengthAdjust="spacingAndGlyphs">Listo</text>
<rect x="1451" y="1081" width="62" height="41" fill="#cfcecd"/>
<rect x="1638" y="1081" width="26" height="41" fill="#dfdfdd"/>
<path d="M1471.500,1095.500H1491V1113H1471.500ZM1471.500,1101.300H1491M1471.500,1107.200H1491M1478,1095.500V1113M1484.500,1095.500V1113" fill="none" stroke="#555" stroke-width="1.300"/>
<path d="M1534,1095H1554V1113.500H1534ZM1537,1097.500H1551V1111H1537ZM1540,1101H1548M1540,1104H1548M1540,1107.500H1548" fill="none" stroke="#555" stroke-width="1.200"/>
<path d="M1596.500,1095H1616.500V1113.500H1596.500ZM1596.500,1106H1603V1095M1603,1106H1609.500V1095" fill="none" stroke="#555" stroke-width="1.300"/>
<path d="M1644.500,1103.500H1656" stroke="#555" stroke-width="1.300"/>
<rect x="1665" y="1102.500" width="148" height="2.500" fill="#acacac"/>
<rect x="1738.500" y="1099" width="1.500" height="9" fill="#acacac"/>
<rect x="1696" y="1096" width="8" height="17" fill="#6e6e6e"/>
<path d="M1820.500,1104H1833M1826.700,1098V1110" stroke="#555" stroke-width="1.300"/>
<text x="1860.500" y="1110" font-size="16" fill="#5a5a5a" textLength="30.500" lengthAdjust="spacingAndGlyphs">50%</text>

<!-- red annotation arrows -->
<g fill="none" stroke="#ed1c24" stroke-width="4" stroke-linejoin="round">
<path d="M442,35L477,60.500H460V86H422V60.500H405.500Z"/>
<path d="M123,315H154V333H168L136.600,352L107,333H123Z"/>
<path d="M281,305H304V325H316L291.400,347L268,325H281Z"/>
<path d="M444,304H475V323H488L458.800,345L430,323H444Z"/>
<path d="M608,300H634V317H645L620,335L596,317H608Z"/>
</g>
</svg>
</body></html>
